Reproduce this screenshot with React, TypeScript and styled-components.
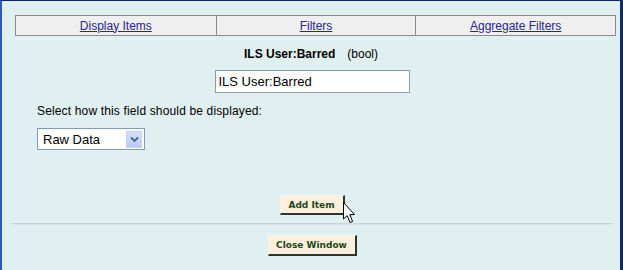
import React from "react";
import styled, { createGlobalStyle } from "styled-components";

const Global = createGlobalStyle`
  html, body { margin: 0; padding: 0; background: #e0eff0; }
  body { font-family: "Liberation Sans", Arial, sans-serif; }
`;

const Window = styled.div`
  position: relative;
  width: 623px;
  height: 270px;
  box-sizing: border-box;
  background: #e0eff0;
  border-top: 1px solid #0a246a;
  border-left: 2px solid #2f56c8;
  border-right: 3px solid #0c2a6e;
  display: flex;
  flex-direction: column;
  overflow: hidden;
`;

const Tabs = styled.div`
  margin: 14px 4px 0 13px;
  height: 21px;
  box-sizing: border-box;
  border: 1px solid #8a8a8a;
  background: #efefef;
  display: grid;
  grid-template-columns: 1fr 1fr 1fr;
`;

const Tab = styled.div<{ $first?: boolean }>`
  display: flex;
  align-items: center;
  justify-content: center;
  border-left: ${(p) => (p.$first ? "none" : "1px solid #8a8a8a")};
  font-size: 12px;
`;

const TabLink = styled.a`
  color: #26268e;
  text-decoration: underline;
  cursor: pointer;
`;

const Heading = styled.div`
  margin-top: 11px;
  text-align: center;
  font-size: 12px;
  line-height: 15px;
  color: #000;
`;

const Bold = styled.span`
  font-weight: bold;
`;

const TypeNote = styled.span`
  margin-left: 12px;
`;

const NameInput = styled.input`
  align-self: center;
  margin-top: 8px;
  margin-left: 2px;
  width: 195px;
  height: 23px;
  box-sizing: border-box;
  border: 1px solid #8f9ca8;
  background: #fff;
  padding: 0 3px;
  font-family: "Liberation Sans", Arial, sans-serif;
  font-size: 13px;
  color: #000;
  outline: none;
`;

const Label = styled.div`
  margin: 11px 0 0 35px;
  font-size: 12px;
  line-height: 15px;
  letter-spacing: 0.15px;
  color: #000;
`;

const SelectBox = styled.div`
  margin: 9px 0 0 35px;
  width: 108px;
  height: 22px;
  box-sizing: border-box;
  border: 1px solid #7f9db9;
  background: #fff;
  display: flex;
  align-items: center;
  justify-content: space-between;
  padding: 0 2px 0 5px;
  font-size: 13px;
`;

const DropButton = styled.div`
  width: 16px;
  height: 17px;
  background: linear-gradient(#d6e2fc, #b6caf6);
  border: 1px solid #c3d3fd;
  box-sizing: border-box;
  display: flex;
  align-items: center;
  justify-content: center;
`;

const Button = styled.button<{ $w: number; $h: number; $mt: number }>`
  align-self: center;
  margin-top: ${(p) => p.$mt}px;
  margin-left: 2px;
  width: ${(p) => p.$w}px;
  height: ${(p) => p.$h}px;
  box-sizing: border-box;
  background: #fcefdc;
  color: #1b471b;
  font-family: "DejaVu Sans", Verdana, sans-serif;
  font-weight: bold;
  font-size: 9px;
  border-top: 1px solid #f4f4f4;
  border-left: 1px solid #f4f4f4;
  border-right: 2px solid #2e362e;
  border-bottom: 2px solid #2e362e;
  padding: 0;
  cursor: pointer;
`;

const Rule = styled.div`
  margin: 8px 8px 0 10px;
  height: 2px;
  border-top: 1px solid #c6d5d6;
  border-bottom: 1px solid #d5e3e4;
  box-sizing: border-box;
`;

const Pointer = styled.svg`
  position: absolute;
  left: 340px;
  top: 200px;
`;

export default function App() {
  return (
    <>
      <Global />
      <Window>
        <Tabs>
          <Tab $first>
            <TabLink>Display Items</TabLink>
          </Tab>
          <Tab>
            <TabLink>Filters</TabLink>
          </Tab>
          <Tab>
            <TabLink>Aggregate Filters</TabLink>
          </Tab>
        </Tabs>
        <Heading>
          <Bold>ILS User:Barred</Bold>
          <TypeNote>(bool)</TypeNote>
        </Heading>
        <NameInput defaultValue="ILS User:Barred" />
        <Label>Select how this field should be displayed:</Label>
        <SelectBox>
          <span>Raw Data</span>
          <DropButton>
            <svg width="9" height="7" viewBox="0 0 9 7">
              <path d="M1 1.5 L4.5 5 L8 1.5" fill="none" stroke="#4d6185" strokeWidth="1.8" />
            </svg>
          </DropButton>
        </SelectBox>
        <Button $w={65} $h={20} $mt={45}>Add Item</Button>
        <Rule />
        <Button $w={89} $h={21} $mt={10}>Close Window</Button>
        <Pointer width="14" height="24" viewBox="0 0 14 24">
          <path
            d="M1.5 1.5 L1.5 18 L5.2 14.6 L8 21.5 L10.6 20.4 L7.8 13.6 L12.5 13.6 Z"
            fill="#fff"
            stroke="#000"
            strokeWidth="1"
            strokeLinejoin="miter"
          />
        </Pointer>
      </Window>
    </>
  );
}
